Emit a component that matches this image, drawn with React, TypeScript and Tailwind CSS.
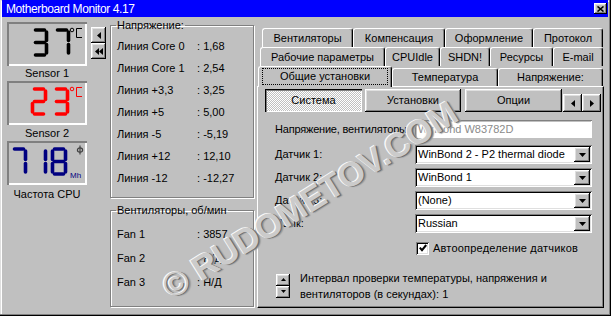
import React from "react";

const raised =
  "bg-[#c0c0c0] shadow-[inset_-1px_-1px_#000,inset_1px_1px_#fff,inset_-2px_-2px_#808080,inset_2px_2px_#dfdfdf]";
const sunken =
  "bg-white shadow-[inset_1px_1px_#808080,inset_-1px_-1px_#fff,inset_2px_2px_#000,inset_-2px_-2px_#dfdfdf]";

const SEG: Record<string, string> = {
  a: "M3.5 2H12.5",
  b: "M14.5 4V12.5",
  c: "M14.5 16.5V25",
  d: "M3.5 27H12.5",
  e: "M1.5 16.5V25",
  f: "M1.5 4V12.5",
  g: "M3.5 14.5H12.5",
};

const DIGITS: Record<string, string> = {
  "0": "abcdef",
  "1": "bc",
  "2": "abged",
  "3": "abgcd",
  "7": "abc",
  "8": "abcdefg",
};

function Digit({ d, x, color }: { d: string; x: number; color: string }) {
  return (
    <g transform={`translate(${x} 6)`} stroke={color} strokeWidth={3.6} strokeLinecap="round" fill="none">
      {DIGITS[d].split("").map((s) => (
        <path key={s} d={SEG[s]} />
      ))}
    </g>
  );
}

function Lcd({ value, xs, color, unit }: { value: string; xs: number[]; color: string; unit: "c" | "mhz" }) {
  return (
    <div className="w-[80px] h-[44px] shadow-[inset_2px_2px_#808080,inset_-2px_-2px_#fff]">
      <svg width="80" height="44" viewBox="0 0 80 44">
        {value.split("").map((d, i) => (
          <Digit key={i} d={d} x={xs[i]} color={color} />
        ))}
        {unit === "c" ? (
          <g stroke={color} strokeWidth={1} fill="none">
            <circle cx="65" cy="8" r="1.8" />
            <path d="M75 6.5H69.5V15.5H75" />
          </g>
        ) : (
          <>
            <g stroke="#404040" strokeWidth={1.2} fill="none">
              <path d="M73 4.5V13.5" />
              <ellipse cx="73" cy="9" rx="2.6" ry="2.2" />
            </g>
            <text x="63" y="37" fontSize="8" fill={color} fontFamily="Liberation Sans, Arial, sans-serif">
              Mh
            </text>
          </>
        )}
      </svg>
    </div>
  );
}

function Tri({ dir, w = 4, h = 7 }: { dir: "l" | "r" | "u" | "d"; w?: number; h?: number }) {
  const pts =
    dir === "l"
      ? `${w},0 0,${h / 2} ${w},${h}`
      : dir === "r"
      ? `0,0 ${w},${h / 2} 0,${h}`
      : dir === "d"
      ? `0,0 ${w},0 ${w / 2},${h}`
      : `0,${h} ${w},${h} ${w / 2},0`;
  return (
    <svg width={w} height={h} viewBox={`0 0 ${w} ${h}`}>
      <polygon points={pts} fill="#000" />
    </svg>
  );
}

function Group({ title, h, rows, rowH, pt }: { title: string; h: string; rows: [string, string][]; rowH: string; pt: string }) {
  return (
    <fieldset className={`w-[144px] ${h} border border-[#808080] shadow-[inset_1px_1px_#fff,1px_1px_#fff] p-0 m-0`}>
      <legend className="ml-[5px] px-[1px] leading-[13px]">{title}</legend>
      <div className={`${pt} pl-[6px] flex flex-col`}>
        {rows.map(([l, v]) => (
          <div key={l} className={`${rowH} flex items-center`}>
            <span className="w-[80px]">{l}</span>
            <span>: {v}</span>
          </div>
        ))}
      </div>
    </fieldset>
  );
}

function Tab({ label, w, h = "h-[19px]" }: { label: string; w: string; h?: string }) {
  return (
    <div
      className={`${w} ${h} flex items-center justify-center border-l border-t border-white border-r border-r-black rounded-t-[3px] shadow-[inset_-1px_0_#808080] bg-[#c0c0c0]`}
    >
      {label}
    </div>
  );
}

function Combo({ value }: { value: string }) {
  return (
    <div className={`w-[177px] h-[19px] ${sunken} flex items-center justify-between pl-[3px] pr-[2px]`}>
      <span>{value}</span>
      <div className={`w-[16px] h-[15px] ${raised} flex items-center justify-center`}>
        <Tri dir="d" w={7} h={4} />
      </div>
    </div>
  );
}

export default function App() {
  const volts: [string, string][] = [
    ["Линия Core 0", "1,68"],
    ["Линия Core 1", "2,54"],
    ["Линия +3,3", "3,25"],
    ["Линия +5", "5,00"],
    ["Линия -5", "-5,19"],
    ["Линия +12", "12,10"],
    ["Линия -12", "-12,27"],
  ];
  const fans: [string, string][] = [
    ["Fan 1", "3857"],
    ["Fan 2", "Н/Д"],
    ["Fan 3", "Н/Д"],
  ];

  return (
    <div className="relative w-[611px] h-[316px] overflow-hidden bg-[#c0c0c0] text-[11px] text-black font-['Liberation_Sans',Arial,sans-serif] shadow-[inset_-1px_-1px_#000,inset_-2px_-2px_#808080,inset_1px_1px_#dfdfdf,inset_2px_2px_#fff] flex flex-col">
      {/* title bar */}
      <div className="mx-[2px] mr-[3px] h-[17px] bg-[#0000ff] flex items-center justify-between pl-[4px] pr-[1px]">
        <span className="text-white text-[12px] tracking-[-0.4px]">Motherboard Monitor 4.17</span>
        <div className={`w-[13px] h-[11px] ${raised} flex items-center justify-center`}>
          <svg width="7" height="6" viewBox="0 0 7 6">
            <path d="M0.5 0.5L6.5 5.5M6.5 0.5L0.5 5.5" stroke="#000" strokeWidth="1.6" />
          </svg>
        </div>
      </div>

      <div className="flex pl-[2px]">
        {/* sensors */}
        <div className="w-[108px] pl-[5px] pt-[5px] flex flex-col">
          <div className="flex">
            <Lcd value="37" xs={[25, 47]} color="#000" unit="c" />
            <div className="ml-[4px] mt-[5px] flex flex-col">
              <div className={`w-[15px] h-[16px] ${raised} flex items-center justify-center`}>
                <Tri dir="l" />
              </div>
              <div className={`w-[15px] h-[16px] ${raised} flex items-center justify-center`}>
                <Tri dir="l" />
                <Tri dir="l" />
              </div>
            </div>
          </div>
          <div className="w-[80px] h-[15px] leading-[15px] text-center">Sensor 1</div>
          <Lcd value="23" xs={[24, 46]} color="#ff0000" unit="c" />
          <div className="w-[80px] h-[16px] leading-[16px] text-center">Sensor 2</div>
          <Lcd value="718" xs={[4, 24, 44]} color="#000080" unit="mhz" />
          <div className="w-[80px] h-[19px] leading-[19px] text-center">Частота CPU</div>
        </div>

        {/* readings */}
        <div className="w-[144px] pt-[2px] flex flex-col gap-[6px]">
          <Group title="Напряжение:" h="h-[179px]" rows={volts} rowH="h-[22px]" pt="pt-[3px]" />
          <Group title="Вентиляторы, об/мин" h="h-[103px]" rows={fans} rowH="h-[24px]" pt="pt-[5px]" />
        </div>

        {/* settings tabs */}
        <div className="ml-[3px] w-[347px] pt-[11px] flex flex-col">
          <div className="flex pl-[5px]">
            <Tab label="Вентиляторы" w="w-[91px]" />
            <Tab label="Компенсация" w="w-[92px]" />
            <Tab label="Оформление" w="w-[88px]" />
            <Tab label="Протокол" w="w-[70px]" />
          </div>
          <div className="flex pl-[3px]">
            <Tab label="Рабочие параметры" w="w-[125px]" />
            <Tab label="CPUIdle" w="w-[55px]" />
            <Tab label="SHDN!" w="w-[50px]" />
            <Tab label="Ресурсы" w="w-[63px]" />
            <Tab label="E-mail" w="w-[50px]" />
          </div>
          <div className="flex items-end pl-[1px] h-[20px] relative z-10">
            <div className="w-[134px] h-[21px] -mb-[1px] border-l border-t border-white border-r border-r-black rounded-t-[3px] shadow-[inset_-1px_0_#808080] bg-[#c0c0c0] px-[3px] pt-[1px] pb-[2px]">
              <div className="h-full border border-dotted border-black flex items-center justify-center">
                Общие установки
              </div>
            </div>
            <Tab label="Температура" w="w-[106px]" h="h-[18px]" />
            <Tab label="Напряжение:" w="w-[105px]" h="h-[18px]" />
          </div>

          <div className="h-[222px] border-l border-t border-white border-r border-b border-r-black border-b-black shadow-[inset_-1px_-1px_#808080] pl-[7px] pt-[2px] flex flex-col">
            <div className="flex items-end">
              <div className="w-[97px] h-[23px] flex items-center justify-center bg-[repeating-conic-gradient(#c0c0c0_0_25%,#fff_0_50%)] bg-[length:2px_2px] shadow-[inset_1px_1px_#000,inset_2px_2px_#808080,inset_-1px_-1px_#fff]">
                Система
              </div>
              <div className={`ml-[3px] w-[96px] h-[23px] ${raised} flex items-center justify-center`}>Установки</div>
              <div className={`ml-[4px] w-[97px] h-[23px] ${raised} flex items-center justify-center`}>Опции</div>
              <div className={`ml-[1px] w-[19px] h-[18px] ${raised} flex items-center justify-center`}>
                <Tri dir="l" />
              </div>
              <div className={`w-[19px] h-[18px] ${raised} flex items-center justify-center`}>
                <Tri dir="r" />
              </div>
            </div>

            <div className="mt-[8px] pl-[10px] flex flex-col">
              <div className="flex items-center h-[18px]">
                <span className="w-[140px] whitespace-nowrap tracking-[-0.2px]">Напряжение, вентиляторы:</span>
                <div className="w-[177px] h-[18px] bg-white shadow-[inset_1px_1px_#808080,inset_-1px_-1px_#fff,inset_2px_2px_#c0c0c0] flex items-center pl-[3px] text-[#8a8a8a]">
                  Winbond W83782D
                </div>
              </div>
              <div className="flex items-center mt-[7px]">
                <span className="w-[140px]">Датчик 1:</span>
                <Combo value="WinBond 2 - P2 thermal diode" />
              </div>
              <div className="flex items-center mt-[4px]">
                <span className="w-[140px]">Датчик 2:</span>
                <Combo value="WinBond 1" />
              </div>
              <div className="flex items-center mt-[4px]">
                <span className="w-[140px]">Датчик 3:</span>
                <Combo value="(None)" />
              </div>
              <div className="flex items-center mt-[4px]">
                <span className="w-[140px]">Язык:</span>
                <Combo value="Russian" />
              </div>
              <div className="flex items-center mt-[7px] pl-[141px]">
                <div className={`w-[13px] h-[13px] ${sunken} flex items-center justify-center`}>
                  <svg width="8" height="8" viewBox="0 0 8 8">
                    <path d="M0.8 3.6L3 6.2L7.2 1" stroke="#000" strokeWidth="2" fill="none" />
                  </svg>
                </div>
                <span className="ml-[4px] tracking-[0.2px]">Автоопределение датчиков</span>
              </div>
              <div className="flex items-center mt-[13px] pl-[1px]">
                <div className="flex flex-col">
                  <div className={`w-[14px] h-[12px] ${raised} flex items-center justify-center`}>
                    <Tri dir="u" w={5} h={3} />
                  </div>
                  <div className={`w-[14px] h-[12px] ${raised} flex items-center justify-center`}>
                    <Tri dir="d" w={5} h={3} />
                  </div>
                </div>
                <div className="ml-[10px] leading-[16px]">
                  Интервал проверки температуры, напряжения и
                  <br />
                  вентиляторов (в секундах): 1
                </div>
              </div>
            </div>
          </div>
        </div>
      </div>

      {/* watermark */}
      <div className="absolute left-[310px] top-[200px] -translate-x-1/2 -translate-y-1/2 rotate-[-32deg] whitespace-nowrap pointer-events-none font-bold text-[34px] text-[#cbcbcb] [text-shadow:-1px_-1px_0_#fafafa,1px_1px_0_#6e6e6e,2px_2px_1px_#9a9a9a]">
        © RUDOMETOV.COM
      </div>
    </div>
  );
}
